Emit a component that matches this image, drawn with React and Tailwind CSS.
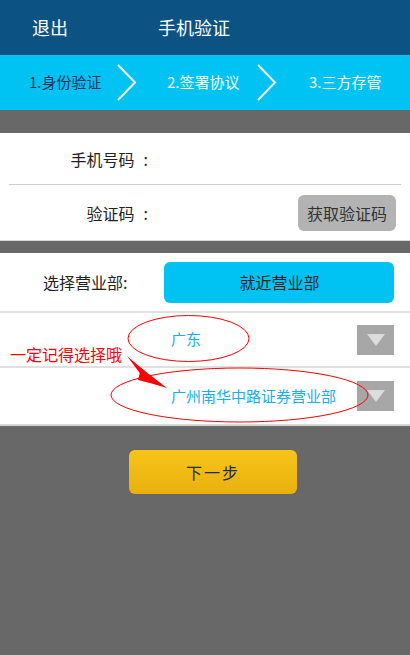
import React from 'react';

const font = { fontFamily: '"Noto Sans CJK SC", "Noto Sans", sans-serif' };

const Chevron = () => (
  <svg width="20" height="37" viewBox="0 0 20 37" className="shrink-0">
    <path d="M1 1 L18 18.5 L1 36" fill="none" stroke="white" strokeWidth="2" />
  </svg>
);

const DropBox = () => (
  <div className="w-[37px] h-[30px] bg-[#a7a7a7] flex items-center justify-center">
    <svg width="18" height="12" viewBox="0 0 18 12">
      <path d="M0 0 H18 L9 12 Z" fill="#dcdcdc" />
    </svg>
  </div>
);

const Label = ({ children }) => (
  <span className="w-[148px] flex justify-end text-[16px] text-[#222]">
    <span>{children}</span>
    <span className="ml-[9px]">:</span>
  </span>
);

const App = () => {
  return (
    <div className="relative w-full min-h-[655px] bg-[#686868]" style={font}>
      {/* top bar */}
      <div className="h-[55px] bg-[#0c5282] flex items-center text-white text-[18px]">
        <span className="ml-[32px]">退出</span>
        <span className="ml-[90px]">手机验证</span>
      </div>

      {/* steps */}
      <div className="h-[55px] bg-[#00c3f4] flex items-center text-[15px]">
        <span className="ml-[29px] w-[72px] text-[#1b2f5a] whitespace-nowrap">1.身份验证</span>
        <span className="ml-[16px]"><Chevron /></span>
        <span className="ml-[30px] w-[73px] text-white whitespace-nowrap">2.签署协议</span>
        <span className="ml-[17px]"><Chevron /></span>
        <span className="ml-[32px] text-white whitespace-nowrap">3.三方存管</span>
      </div>

      <div className="h-[23px]" />

      {/* phone card */}
      <div className="bg-white border-b border-[#d8d8d8]">
        <div className="h-[51px] flex items-center">
          <Label>手机号码</Label>
        </div>
        <div className="mx-[9px] h-px bg-[#cfcfcf]" />
        <div className="h-[55px] flex items-center justify-between">
          <Label>验证码</Label>
          <button className="mr-[14px] w-[98px] h-[36px] rounded-md bg-[#b3b3b3] text-[16px] text-[#333]">获取验证码</button>
        </div>
      </div>

      <div className="h-[12px]" />

      {/* branch card */}
      <div className="bg-white border-b-2 border-[#d8d8d8]">
        <div className="h-[58px] flex items-center">
          <span className="ml-[43px] text-[16px] text-[#222]">选择营业部:</span>
          <button className="ml-[37px] w-[230px] h-[41px] rounded-md bg-[#00c3f4] text-[16px] text-[#222]">就近营业部</button>
        </div>
        <div className="h-[2px] bg-[#e0e0e0]" />
        <div className="h-[53px] flex items-center justify-between">
          <span className="ml-[171px] text-[15px] text-[#19aee6]">广东</span>
          <span className="mr-[16px]"><DropBox /></span>
        </div>
        <div className="h-[2px] bg-[#e0e0e0]" />
        <div className="h-[56px] flex items-center justify-between">
          <span className="ml-[171px] text-[15px] text-[#19aee6]">广州南华中路证券营业部</span>
          <span className="mr-[16px]"><DropBox /></span>
        </div>
      </div>

      {/* next */}
      <div className="flex pt-[24px] pb-[160px]">
        <button className="ml-[129px] w-[168px] h-[44px] rounded-md bg-gradient-to-b from-[#f7c418] to-[#e9b00f] text-[16px] text-[#1d2a3a] tracking-[2px]">下一步</button>
      </div>

      {/* red annotation overlay */}
      <span className="absolute left-[10px] top-[343px] text-[16px] text-[#ff0000] leading-[22px]">一定记得选择哦</span>
      <svg className="absolute left-0 top-0 pointer-events-none" width="410" height="655" viewBox="0 0 410 655">
        <ellipse cx="188.5" cy="338.5" rx="60.5" ry="23" fill="none" stroke="#ff0000" strokeWidth="1" />
        <ellipse cx="239.5" cy="395" rx="128.5" ry="27" fill="none" stroke="#ff0000" strokeWidth="1" />
        <path d="M127 356 L146 372 L142 376 Z" fill="#ff0000" />
        <path d="M141 368 L167 388 L150 383 Z M141 368 L150 383 L138 380 Z" fill="#ff0000" />
      </svg>
    </div>
  );
};

export default App;
